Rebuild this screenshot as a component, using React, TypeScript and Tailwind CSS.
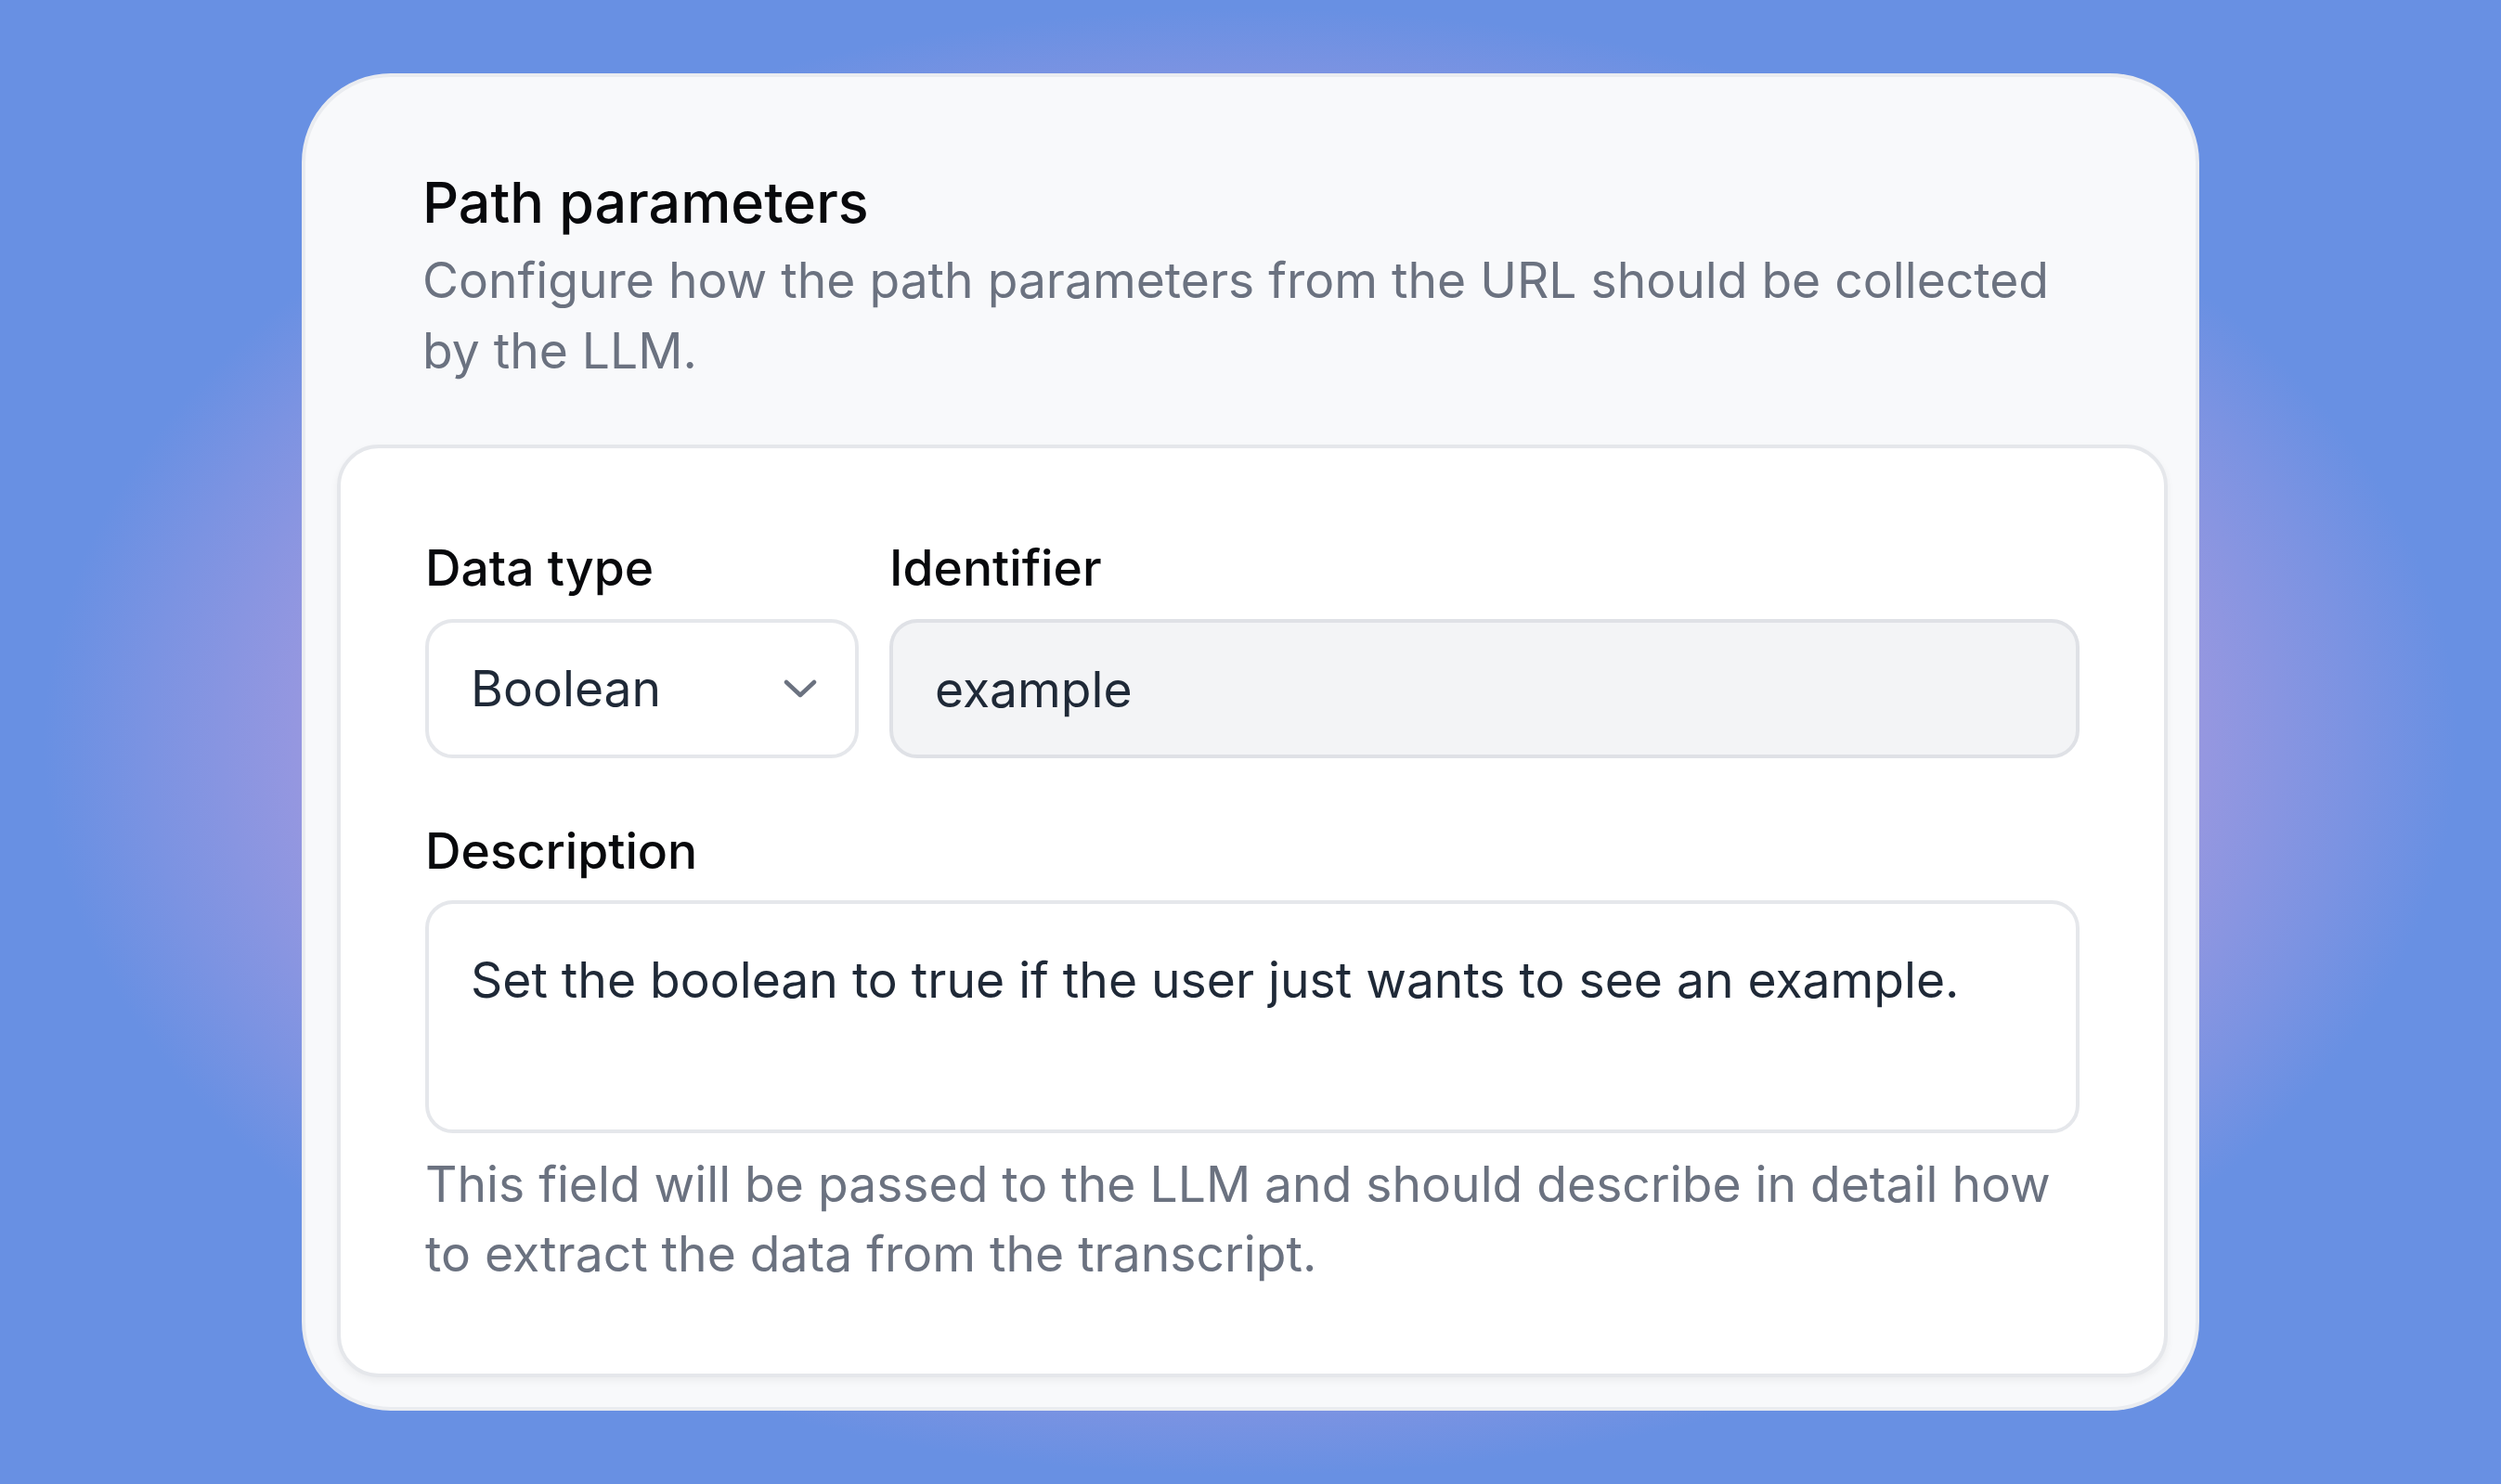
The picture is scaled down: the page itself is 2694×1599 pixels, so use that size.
import React from "react";

export default function App() {
  return (
    <div className="w-full h-[1599px] flex items-center justify-center bg-[#6890e3] bg-[radial-gradient(ellipse_1300px_790px_at_center,#c8a0dc_0%,#b49cde_55%,#9597e0_79%,#7b93e2_91.5%,#6890e3_100%)] font-['Inter',sans-serif]">
      <div className="w-[2044px] rounded-[96px] border-[4px] border-[#eaecf0] bg-[#f8f9fb] pt-[32px] pb-[32px] pl-[34px] pr-[30px]">
        <div className="pl-[92px] pr-[88px] pt-[58px] pb-[64px]">
          <h2 className="text-[61px] leading-[91px] font-medium text-[#08090c]">Path parameters</h2>
          <p className="text-[53.4px] leading-[75.6px] text-[#6b7280]">
            Configure how the path parameters from the URL should be collected by the LLM.
          </p>
        </div>
        <div className="rounded-[45px] border-[4px] border-[#e5e7eb] bg-white p-[91px] shadow-[0_4px_8px_rgba(0,0,0,0.05)]">
          <div className="flex gap-[33px]">
            <div className="w-[467px] shrink-0">
              <div className="text-[53.4px] leading-[75.6px] font-medium text-[#08090c]">Data type</div>
              <div className="mt-[17px] h-[150px] flex items-center justify-between rounded-[30px] border-[4px] border-[#e5e7eb] bg-white pl-[45px] pr-[41px]">
                <span className="text-[53.4px] leading-[75.6px] text-[#1f2937]">Boolean</span>
                <svg width="36" height="20" viewBox="0 0 36 20" fill="none">
                  <path d="M3 3 L18 17 L33 3" stroke="#6b7280" strokeWidth="4.5" strokeLinecap="round" strokeLinejoin="round" />
                </svg>
              </div>
            </div>
            <div className="flex-1 min-w-0">
              <div className="text-[53.4px] leading-[75.6px] font-medium text-[#08090c]">Identifier</div>
              <input
                readOnly
                value="example"
                className="mt-[17px] block w-full h-[150px] rounded-[30px] border-[4px] border-[#dfe1e6] bg-[#f3f4f6] px-[45px] text-[53.4px] leading-[75.6px] text-[#1f2937] outline-none font-['Inter',sans-serif]"
              />
            </div>
          </div>
          <div className="mt-[62px]">
            <div className="text-[53.4px] leading-[75.6px] font-medium text-[#08090c]">Description</div>
            <textarea
              readOnly
              value="Set the boolean to true if the user just wants to see an example."
              className="mt-[15px] block w-full h-[251px] resize-none overflow-hidden rounded-[30px] border-[4px] border-[#e5e7eb] bg-white px-[45px] py-[44px] text-[53.4px] leading-[75.6px] text-[#1f2937] outline-none font-['Inter',sans-serif]"
            />
            <p className="mt-[17px] text-[53.4px] leading-[75.6px] text-[#6b7280]">
              This field will be passed to the LLM and should describe in detail how to extract the data from the transcript.
            </p>
          </div>
        </div>
      </div>
    </div>
  );
}
